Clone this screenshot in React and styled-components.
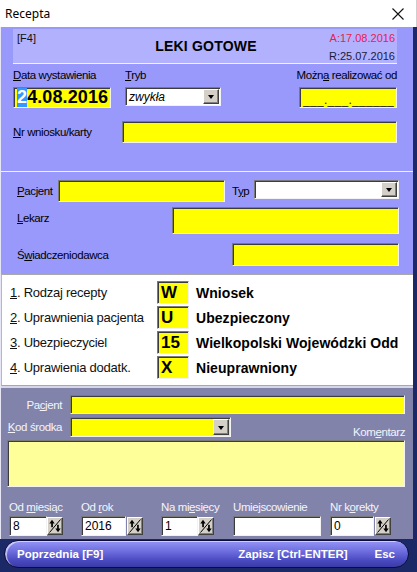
import React from 'react';
import styled, { createGlobalStyle, css } from 'styled-components';

const Global = createGlobalStyle`
  html, body { margin: 0; padding: 0; }
  body {
    width: 417px; height: 572px; overflow: hidden;
    background: #1b2a66;
    font-family: "Liberation Sans", Arial, sans-serif;
    color: #000;
  }
  * { box-sizing: border-box; }
`;

const sunken = css`
  border: 1px solid;
  border-color: #7a7a7a #f2f2f2 #f2f2f2 #7a7a7a;
  box-shadow: inset 1px 1px 0 #3c3c3c;
`;

const raised = css`
  border: 1px solid;
  border-color: #ffffff #404040 #404040 #ffffff;
  box-shadow: inset -1px -1px 0 #808080;
  background: #d4d0c8;
`;

const Window = styled.div`
  width: 417px; height: 572px;
  display: flex; flex-direction: column;
`;

const TitleBar = styled.div`
  height: 27px; flex: none;
  background: #fff;
  display: flex; align-items: center; justify-content: space-between;
  padding-left: 5px;
  font-family: "Noto Sans", "Open Sans", sans-serif;
  font-size: 12px;
  border-right: 1px solid #cfcfcf;
`;

const CloseBtn = styled.div`
  width: 36px; height: 27px;
  display: flex; align-items: center; justify-content: center;
`;

const Body = styled.div`
  flex: 1; display: flex; flex-direction: column; min-height: 0;
`;

const Content = styled.div`
  width: 413px;
  display: flex; flex-direction: column;
  border-left: 1px solid #e6e6f6;
`;

const TopSection = styled.div`
  height: 145px;
  background: #9999fc;
  padding: 2px 16px 0 12px;
  border-bottom: 1px solid #f0f0ff;
`;

const Header = styled.div`
  height: 35px;
  background: #b1b1fd;
  border-bottom: 1px solid #f2f2ff;
  display: grid;
  grid-template-columns: 1fr auto 1fr;
  padding: 3px 2px 0 4px;
  font-size: 11px;
`;

const HeaderLeft = styled.div`
  line-height: 13px;
  color: #111;
`;

const HeaderTitle = styled.div`
  font-weight: bold; font-size: 14px;
  align-self: center;
  margin-top: -3px;
  letter-spacing: 0.2px;
`;

const HeaderDates = styled.div`
  justify-self: end;
  display: flex; flex-direction: column; align-items: flex-end; gap: 5px;
`;

const DateLine = styled.div`
  line-height: 13px;
  color: ${p => (p.$red ? '#e8204e' : '#1a1a3a')};
`;

const FieldGrid = styled.div`
  margin-top: 4px;
  display: grid;
  grid-template-columns: 98px 96px 1fr;
  column-gap: 14px;
`;

const FieldCol = styled.div`
  display: flex; flex-direction: column; gap: 5px;
  align-items: ${p => (p.$right ? 'flex-end' : 'flex-start')};
`;

const Label = styled.div`
  font-size: 11.5px;
  line-height: 14px;
  letter-spacing: -0.4px;
  white-space: nowrap;
  color: ${p => (p.$light ? '#f4f4fa' : '#000')};
  width: ${p => (p.$w ? `${p.$w}px` : 'auto')};
  text-align: ${p => (p.$right ? 'right' : 'left')};
  flex: none;
`;

const U = styled.span`
  text-decoration: underline;
  text-underline-offset: 1px;
`;

const Field = styled.div`
  ${sunken};
  width: ${p => (p.$w ? `${p.$w}px` : 'auto')};
  flex: ${p => (p.$w ? 'none' : '1')};
  height: ${p => p.$h}px;
  background: ${p => p.$bg || '#ffff00'};
  display: flex; align-items: center;
  padding: 0 1px 0 3px;
  overflow: hidden;
  margin-left: ${p => (p.$ml ? p.$ml : '0')};
`;

const DateValue = styled.span`
  font-size: 18px; font-weight: bold; line-height: 19px;
  letter-spacing: 0.1px;
`;

const Sel = styled.span`
  background: #3399ff; color: #fff;
`;

const ComboText = styled.span`
  flex: 1;
  font-size: 12px;
  font-style: ${p => (p.$italic ? 'italic' : 'normal')};
`;

const DropBtn = styled.div`
  ${raised};
  width: 16px; height: 15px; flex: none;
  display: flex; align-items: center; justify-content: center;
`;

const Triangle = styled.div`
  width: 0; height: 0;
  border-left: 3.5px solid transparent;
  border-right: 3.5px solid transparent;
  border-top: 4px solid #000;
  margin-top: 1px;
`;

const MaskText = styled.span`
  font-size: 12px;
  letter-spacing: 0.3px;
  margin-top: 4px;
  color: #222;
`;

const FormRow = styled.div`
  display: flex;
  align-items: ${p => p.$align || 'center'};
  margin-top: ${p => p.$mt || 0}px;
`;

const MidSection = styled.div`
  height: 102px;
  background: #9999fc;
  padding: 8px 14px 0 16px;
`;

const CodesPanel = styled.div`
  height: 112px;
  background: #fff;
  border-top: 1px solid #a8a8a8;
  border-bottom: 1px solid #a8a8a8;
  border-left: 1px solid #b8b8b8;
  padding: 6px 0 0 8px;
  display: grid;
  grid-template-columns: 147px 32px 1fr;
  grid-auto-rows: 23px;
  row-gap: 2px;
  align-items: center;
`;

const CodeLabel = styled.div`
  font-size: 13px;
  letter-spacing: -0.25px;
  color: #111;
  white-space: nowrap;
`;

const CodeBox = styled.div`
  ${sunken};
  height: 23px;
  background: #ffff00;
  font-size: 17px; font-weight: bold;
  display: flex; align-items: center;
  padding-left: 3px;
`;

const CodeValue = styled.div`
  font-size: 14px; font-weight: bold;
  padding-left: 7px;
  white-space: nowrap;
  letter-spacing: 0.05px;
`;

const BottomSection = styled.div`
  height: 153px;
  background: #8283aa;
  border-top: 2px solid #d6d6e6;
  padding: 7px 8px 0 0;
`;

const CommentArea = styled.div`
  ${sunken};
  margin: 3px 0 0 6px;
  height: 47px;
  background: #ffff99;
`;

const SpinGrid = styled.div`
  margin-top: 13px;
  display: grid;
  grid-template-columns: 72px 80px 72px 97px auto;
  padding-left: 8px;
`;

const SpinGroup = styled.div`
  display: flex; flex-direction: column; gap: 2px;
`;

const SpinRow = styled.div`
  display: flex; align-items: center; gap: ${p => p.$gap || 0}px;
`;

const SpinText = styled.span`
  font-size: 12px;
`;

const SpinBtn = styled.div`
  ${raised};
  width: 16px; height: 18px; flex: none;
  display: flex; align-items: center; justify-content: center;
`;

const Footer = styled.div`
  flex: 1;
  background: #1b2a66;
  padding: 1px 8px 0 4px;
`;

const Pill = styled.div`
  height: 28px;
  border: 1px solid #0c0c3a;
  border-radius: 14px;
  background: linear-gradient(to bottom, #9494f6 0%, #7272e2 35%, #4a4ac0 75%, #3a3aa8 100%);
  box-shadow: inset 2px 1px 0 rgba(255,255,255,0.55);
  display: flex; align-items: center;
  padding: 0 13px 0 12px;
  color: #fff;
  font-weight: bold;
  font-size: 11.5px;
`;

const PillText = styled.span`
  margin-left: ${p => p.$ml || 0};
  white-space: nowrap;
`;

function Combo({ w, h, bg, text, italic, btnH = 15 }) {
  return (
    <Field $w={w} $h={h} $bg={bg}>
      <ComboText $italic={italic}>{text}</ComboText>
      <DropBtn style={{ height: btnH }}><Triangle /></DropBtn>
    </Field>
  );
}

function SpinIcon() {
  return (
    <svg width="12" height="14" viewBox="0 0 12 14">
      <line x1="0.5" y1="13.5" x2="11.5" y2="0.5" stroke="#000" strokeWidth="1" />
      <path d="M3 0.8 L0.3 4.6 L5.7 4.6 Z" fill="#000" />
      <rect x="2.2" y="4" width="1.7" height="4.2" fill="#000" />
      <rect x="8.1" y="5.8" width="1.7" height="4.2" fill="#000" />
      <path d="M9 13.2 L6.3 9.4 L11.7 9.4 Z" fill="#000" />
    </svg>
  );
}

function Spin({ label, value, w, gap = 0 }) {
  return (
    <SpinGroup>
      <Label $light>{label}</Label>
      <SpinRow $gap={gap}>
        <Field $w={w} $h={20} $bg="#ffffff"><SpinText>{value}</SpinText></Field>
        <SpinBtn><SpinIcon /></SpinBtn>
      </SpinRow>
    </SpinGroup>
  );
}

export default function App() {
  return (
    <>
      <Global />
      <Window>
        <TitleBar>
          <span>Recepta</span>
          <CloseBtn>
            <svg width="12" height="12" viewBox="0 0 12 12">
              <path d="M0.5 0.5 L11.5 11.5 M11.5 0.5 L0.5 11.5" stroke="#111" strokeWidth="1.1" />
            </svg>
          </CloseBtn>
        </TitleBar>
        <Body>
          <Content>
            <TopSection>
              <Header>
                <HeaderLeft>[F4]</HeaderLeft>
                <HeaderTitle>LEKI GOTOWE</HeaderTitle>
                <HeaderDates>
                  <DateLine $red>A:17.08.2016</DateLine>
                  <DateLine>R:25.07.2016</DateLine>
                </HeaderDates>
              </Header>
              <FieldGrid>
                <FieldCol>
                  <Label><U>D</U>ata wystawienia</Label>
                  <Field $w={98} $h={21}>
                    <DateValue><Sel>2</Sel>4.08.2016</DateValue>
                  </Field>
                </FieldCol>
                <FieldCol>
                  <Label><U>T</U>ryb</Label>
                  <Combo w={96} h={19} bg="#ffffff" text="zwykła" italic />
                </FieldCol>
                <FieldCol $right>
                  <Label>Możn<U>a</U> realizować od</Label>
                  <Field $w={98} $h={21}>
                    <MaskText>___.___.______</MaskText>
                  </Field>
                </FieldCol>
              </FieldGrid>
              <FormRow $mt={13}>
                <Label $w={109}><U>N</U>r wniosku/karty</Label>
                <Field $h={22} />
              </FormRow>
            </TopSection>

            <MidSection>
              <FormRow $align="flex-start">
                <Label $w={41} style={{ lineHeight: '22px' }}><U>P</U>acjent</Label>
                <Field $w={167} $h={22} />
                <Label $w={22} style={{ lineHeight: '22px', marginLeft: 7 }}>T<U>y</U>p</Label>
                <Combo h={19} bg="#ffffff" text="" />
              </FormRow>
              <FormRow $mt={5}>
                <Label style={{ marginTop: -5 }}><U>L</U>ekarz</Label>
                <Field $w={227} $h={27} $ml="auto" />
              </FormRow>
              <FormRow $mt={9}>
                <Label>Ś<U>w</U>iadczeniodawca</Label>
                <Field $w={167} $h={23} $ml="auto" />
              </FormRow>
            </MidSection>

            <CodesPanel>
              <CodeLabel><U>1</U>. Rodzaj recepty</CodeLabel>
              <CodeBox>W</CodeBox>
              <CodeValue>Wniosek</CodeValue>
              <CodeLabel><U>2</U>. Uprawnienia pacjenta</CodeLabel>
              <CodeBox>U</CodeBox>
              <CodeValue>Ubezpieczony</CodeValue>
              <CodeLabel><U>3</U>. Ubezpieczyciel</CodeLabel>
              <CodeBox>15</CodeBox>
              <CodeValue>Wielkopolski Wojewódzki Odd</CodeValue>
              <CodeLabel><U>4</U>. Uprawienia dodatk.</CodeLabel>
              <CodeBox>X</CodeBox>
              <CodeValue>Nieuprawniony</CodeValue>
            </CodesPanel>

            <BottomSection>
              <FormRow>
                <Label $light $right $w={61} style={{ marginRight: 8 }}>Pa<U>c</U>jent</Label>
                <Field $h={19} />
              </FormRow>
              <FormRow $mt={3} $align="flex-end">
                <Label $light $right $w={61} style={{ marginRight: 8, alignSelf: 'center' }}><U>K</U>od środka</Label>
                <Combo w={161} h={20} text="" btnH={16} />
                <Label $light style={{ marginLeft: 'auto', marginBottom: -2 }}>Kom<U>e</U>ntarz</Label>
              </FormRow>
              <CommentArea />
              <SpinGrid>
                <Spin label={<>Od <U>m</U>iesiąc</>} value="8" w={38} />
                <Spin label={<>Od <U>r</U>ok</>} value="2016" w={45} gap={1} />
                <Spin label={<>Na mi<U>e</U>sięcy</>} value="1" w={37} />
                <SpinGroup>
                  <Label $light>Umiejscowienie</Label>
                  <Field $w={88} $h={20} $bg="#ffffff" />
                </SpinGroup>
                <Spin label={<>Nr k<U>o</U>rekty</>} value="0" w={44} gap={1} />
              </SpinGrid>
            </BottomSection>
          </Content>
          <Footer>
            <Pill>
              <PillText>Poprzednia [F9]</PillText>
              <PillText $ml="auto">Zapisz [Ctrl-ENTER]</PillText>
              <PillText $ml="27px">Esc</PillText>
            </Pill>
          </Footer>
        </Body>
      </Window>
    </>
  );
}
